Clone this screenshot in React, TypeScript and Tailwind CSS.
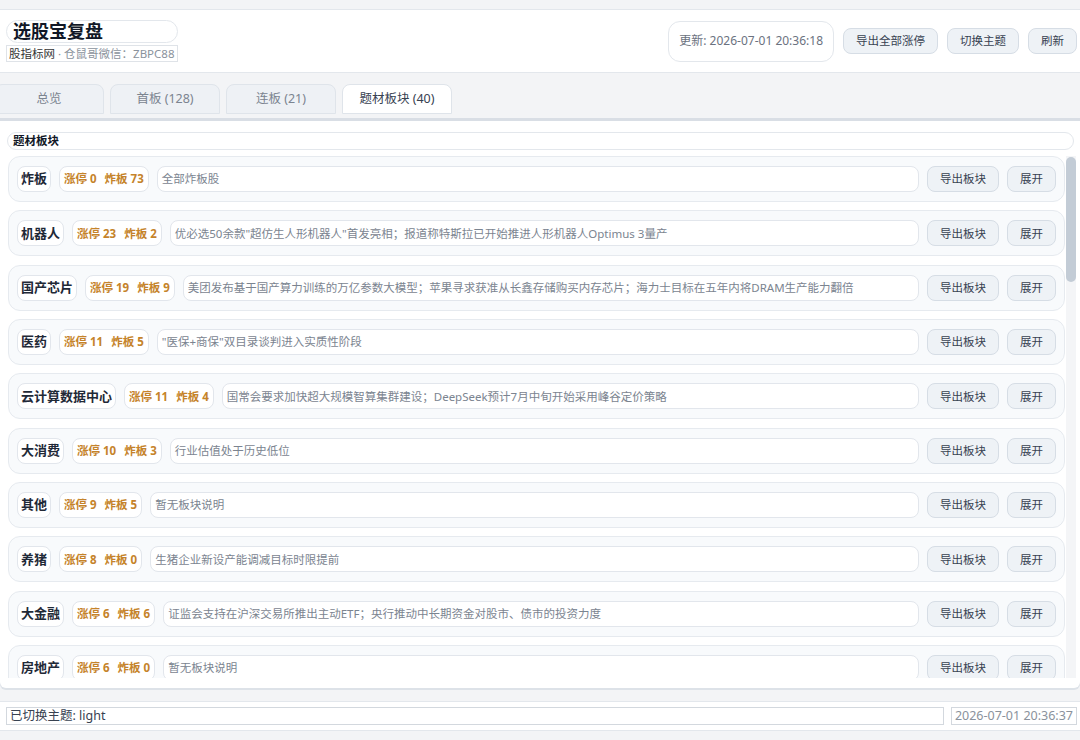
import React from 'react';

interface Sector {
  name: string;
  zt: number;
  zb: number;
  desc: string;
}

const sectors: Sector[] = [
  { name: '炸板', zt: 0, zb: 73, desc: '全部炸板股' },
  { name: '机器人', zt: 23, zb: 2, desc: '优必选50余款"超仿生人形机器人"首发亮相；报道称特斯拉已开始推进人形机器人Optimus 3量产' },
  { name: '国产芯片', zt: 19, zb: 9, desc: '美团发布基于国产算力训练的万亿参数大模型；苹果寻求获准从长鑫存储购买内存芯片；海力士目标在五年内将DRAM生产能力翻倍' },
  { name: '医药', zt: 11, zb: 5, desc: '"医保+商保"双目录谈判进入实质性阶段' },
  { name: '云计算数据中心', zt: 11, zb: 4, desc: '国常会要求加快超大规模智算集群建设；DeepSeek预计7月中旬开始采用峰谷定价策略' },
  { name: '大消费', zt: 10, zb: 3, desc: '行业估值处于历史低位' },
  { name: '其他', zt: 9, zb: 5, desc: '暂无板块说明' },
  { name: '养猪', zt: 8, zb: 0, desc: '生猪企业新设产能调减目标时限提前' },
  { name: '大金融', zt: 6, zb: 6, desc: '证监会支持在沪深交易所推出主动ETF；央行推动中长期资金对股市、债市的投资力度' },
  { name: '房地产', zt: 6, zb: 0, desc: '暂无板块说明' },
];

const tabs = [
  { label: '总览', active: false },
  { label: '首板 (128)', active: false },
  { label: '连板 (21)', active: false },
  { label: '题材板块 (40)', active: true },
];

const btn =
  'flex h-[26px] shrink-0 items-center rounded-lg border border-[#d6dde5] bg-[#eef2f6] px-[12px] text-[11.5px] text-[#374151]';

const SectorRow = ({ sector }: { sector: Sector }) => (
  <div className="flex h-[46px] shrink-0 items-center gap-2 rounded-xl border border-[#e6eaef] bg-[#f8fafc] px-2">
    <span className="flex h-[26px] shrink-0 items-center rounded-lg border border-[#e2e6ec] bg-white px-[3px] text-[13px] font-bold text-[#1f2937]">
      {sector.name}
    </span>
    <span className="flex h-[26px] shrink-0 items-center gap-2 rounded-lg border border-[#e2e6ec] bg-white px-[4px] text-[11.5px] font-bold text-[#c5832a]">
      <span>涨停 {sector.zt}</span>
      <span>炸板 {sector.zb}</span>
    </span>
    <div className="flex h-[26px] min-w-0 flex-1 items-center overflow-hidden whitespace-nowrap rounded-lg border border-[#e2e6ec] bg-white px-[4px] text-[11.5px] text-[#7b8490]">
      {sector.desc}
    </div>
    <button className={btn}>导出板块</button>
    <button className={btn}>展开</button>
  </div>
);

export default function App() {
  return (
    <div className="flex h-[740px] flex-col overflow-hidden bg-[#f3f4f6] pt-[9px] font-['Noto_Sans','Noto_Sans_CJK_SC',sans-serif]">
      {/* header */}
      <header className="flex items-center justify-between border-y border-[#e3e7ec] bg-white py-[10px] pl-[6px] pr-[3px]">
        <div className="inline-flex flex-col">
          <div className="rounded-xl border border-[#e3e7ec] px-[6px] text-[18px] font-bold leading-[21px] text-[#111827]">
            选股宝复盘
          </div>
          <div className="mt-[2px] border border-[#dfe3e8] px-[2px] text-[11.5px] leading-[15px] text-[#8a929c]">
            <span className="text-[#333]">股指标网</span> · 仓鼠哥微信：ZBPC88
          </div>
        </div>
        <div className="flex items-center gap-[9px]">
          <div className="flex h-[41px] items-center rounded-xl border border-[#e3e7ec] px-[10px] text-[12px] text-[#6b7280]">
            更新: 2026-07-01 20:36:18
          </div>
          <button className={btn}>导出全部涨停</button>
          <button className={btn}>切换主题</button>
          <button className={btn}>刷新</button>
        </div>
      </header>

      {/* tabs */}
      <div className="-ml-[6px] mt-[11px] flex gap-[6px]">
        {tabs.map((t) => (
          <div
            key={t.label}
            className={
              t.active
                ? 'flex h-[30px] w-[110px] items-center justify-center rounded-t-lg border border-[#dfe4ea] bg-white text-[12.5px] text-[#374151]'
                : 'flex h-[30px] w-[110px] items-center justify-center rounded-t-lg border border-[#dfe4ea] bg-[#eef1f5] text-[12.5px] text-[#7b8490]'
            }
          >
            {t.label}
          </div>
        ))}
      </div>

      {/* main panel */}
      <main className="mt-[4px] flex flex-col rounded-b-md border-t-[3px] border-[#d9dee5] bg-white pb-[10px] pl-[8px] pr-[4px] pt-[11px] shadow-[0_2px_0_#dde2e8]">
        <div className="-ml-px mr-[2px] rounded-full border border-[#e3e7ec] px-[5px] text-[11.5px] font-bold leading-[16px] text-[#111827]">
          题材板块
        </div>
        <div className="mt-[6px] flex h-[522px] gap-px">
          <div className="flex min-w-0 flex-1 flex-col gap-[8.33px] overflow-hidden">
            {sectors.map((s) => (
              <SectorRow key={s.name} sector={s} />
            ))}
          </div>
          {/* scrollbar */}
          <div className="flex w-[10px] flex-col bg-[#f4f5f7]">
            <div className="mt-px h-[125px] rounded-full bg-[#c3ccd6]" />
          </div>
        </div>
      </main>

      {/* status bar */}
      <footer className="mt-[13px] flex h-[30px] items-center gap-[7px] border-y border-[#e3e7ec] bg-white pl-[6px] pr-[3px]">
        <div className="flex h-[18px] flex-1 items-center border border-[#d3d8de] px-[3px] text-[12.5px] text-[#374151]">
          已切换主题: light
        </div>
        <div className="flex h-[18px] items-center border border-[#d3d8de] px-[3px] text-[12.5px] text-[#8a929c]">
          2026-07-01 20:36:37
        </div>
      </footer>
    </div>
  );
}
